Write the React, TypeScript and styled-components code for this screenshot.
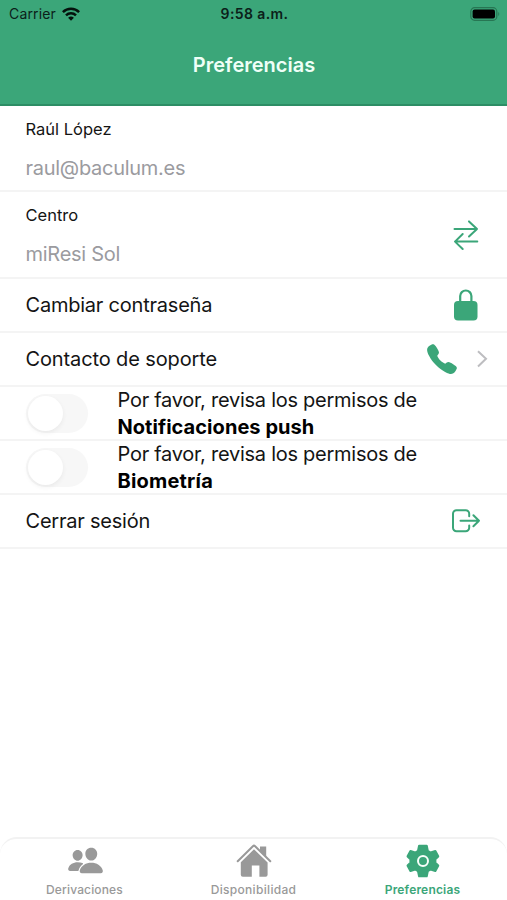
import React from "react";
import styled, { createGlobalStyle } from "styled-components";
import { IoCall, IoPeople } from "react-icons/io5";

const GREEN = "#3ba679";

const GlobalStyle = createGlobalStyle`
  * { box-sizing: border-box; }
  body { margin: 0; background: #fff; font-family: Inter, "Liberation Sans", sans-serif; }
`;

const Screen = styled.div`
  width: 100%;
  height: 100vh;
  display: flex;
  flex-direction: column;
  overflow: hidden;
  background: #fff;
  color: #141414;
`;

const Header = styled.header`
  height: 106px;
  flex: none;
  background: ${GREEN};
  border-bottom: 2px solid #2d8d65;
`;

const StatusBar = styled.div`
  height: 27px;
  padding: 0 7px 0 9px;
  display: grid;
  grid-template-columns: 1fr auto 1fr;
  align-items: center;
  color: #0b2019;
  font-size: 14px;
`;

const Carrier = styled.span`
  display: flex;
  align-items: center;
  gap: 6px;
  letter-spacing: 0.15px;
`;

const Clock = styled.span`
  font-weight: 600;
  letter-spacing: 0.4px;
`;

const Battery = styled.span`
  justify-self: end;
  display: flex;
`;

const Title = styled.h1`
  margin: 0;
  height: 75px;
  padding-left: 1px;
  display: flex;
  align-items: center;
  justify-content: center;
  color: #effff7;
  font-size: 20px;
  font-weight: 600;
`;

const List = styled.main`
  flex: 1;
`;

const Row = styled.div<{ $height?: number; $inset?: number }>`
  height: ${(p) => p.$height ?? 54}px;
  padding: 0 ${(p) => p.$inset ?? 28}px 0 25.5px;
  border-bottom: 2px solid #f4f4f4;
  display: flex;
  align-items: center;
`;

const Field = styled.div`
  flex: 1;
  align-self: stretch;
  padding-top: 10px;
`;

const FieldLabel = styled.div`
  height: 26px;
  line-height: 26px;
  font-size: 16.5px;
`;

const FieldValue = styled.div`
  margin-top: 13px;
  height: 26px;
  line-height: 26px;
  font-size: 20px;
  letter-spacing: -0.27px;
  color: #9b9b9f;
`;

const RowLabel = styled.span<{ $tracking?: number }>`
  flex: 1;
  font-size: 20px;
  letter-spacing: ${(p) => p.$tracking ?? -0.22}px;
`;

const Icon = styled.svg`
  display: block;
  flex: none;
  overflow: visible;
`;

const PhoneIcon = styled(IoCall)`
  color: ${GREEN};
  margin-right: 18px;
`;

const Toggle = styled.span`
  width: 62px;
  height: 39px;
  margin-right: 30px;
  padding: 2px;
  border-radius: 20px;
  background: #f7f7f7;
  flex: none;
`;

const Knob = styled.span`
  display: block;
  width: 35px;
  height: 35px;
  border-radius: 50%;
  background: #fff;
  box-shadow: 0 2px 5px rgba(0, 0, 0, 0.06);
`;

const Permission = styled.p`
  margin: 0;
  padding-top: 2px;
  font-size: 20px;
  line-height: 27px;
  letter-spacing: -0.26px;
  white-space: nowrap;
`;

const Strong = styled.strong<{ $tracking: number }>`
  display: block;
  font-weight: 700;
  color: #000;
  letter-spacing: ${(p) => p.$tracking}px;
`;

const TabBar = styled.nav`
  flex: none;
  height: 63px;
  display: grid;
  grid-template-columns: repeat(3, 1fr);
  border-top: 2px solid #f2f2f2;
  border-radius: 17px 17px 0 0;
`;

const Tab = styled.div<{ $active?: boolean }>`
  display: flex;
  flex-direction: column;
  align-items: center;
  color: ${(p) => (p.$active ? GREEN : "#999")};
  font-weight: ${(p) => (p.$active ? 600 : 500)};
`;

const TabIcon = styled.span<{ $nudge?: number }>`
  height: 43px;
  padding-left: ${(p) => p.$nudge ?? 0}px;
  display: flex;
  align-items: center;
`;

const TabLabel = styled.span<{ $tracking: number }>`
  font-size: 12px;
  line-height: 15px;
  letter-spacing: ${(p) => p.$tracking}px;
`;

function WifiIcon() {
  return (
    <Icon width="18" height="14" viewBox="0 0 18 14" fill="none" stroke="#04120c" strokeWidth="2.5">
      <path d="M.9 5.1a11.6 11.6 0 0 1 16.2 0M4 8.3a7.2 7.2 0 0 1 10 0" />
      <path d="M9 13.7 6.1 10.8a4.2 4.2 0 0 1 5.8 0Z" fill="#04120c" stroke="none" />
    </Icon>
  );
}

function BatteryIcon() {
  return (
    <Icon width="30" height="14" viewBox="0 0 30 14">
      <rect x=".8" y=".7" width="26" height="12.6" rx="3.8" fill="none" stroke="#277653" strokeWidth="1.2" />
      <rect x="2.6" y="2.4" width="22.4" height="9.2" rx="2" fill="#000" />
      <path d="M28.3 5c1.3.6 1.3 3.4 0 4Z" fill="#277653" />
    </Icon>
  );
}

function SwapIcon() {
  return (
    <Icon width="26" height="30" viewBox="0 0 26 30" fill="none" stroke={GREEN} strokeWidth="2" strokeLinecap="round" strokeLinejoin="round">
      <path d="M1.5 9H24M16 1.4 24 9l-8 7.5M24.3 21.6H2M9.7 14 2 21.6 9.7 29" />
    </Icon>
  );
}

function LockIcon() {
  return (
    <Icon width="26" height="32" viewBox="0 0 26 32">
      <path d="M7.2 13V7.1a5.6 5.6 0 0 1 11.2 0V13" fill="none" stroke={GREEN} strokeWidth="2.2" />
      <rect x="1" y="12" width="23.5" height="19.5" rx="4" fill={GREEN} />
    </Icon>
  );
}

function ChevronIcon() {
  return (
    <Icon width="10" height="18" viewBox="0 0 10 18" fill="none" stroke="#bdbdc0" strokeWidth="2">
      <path d="m1 1.3 8 7.5-8 7.6" />
    </Icon>
  );
}

function LogoutIcon() {
  return (
    <Icon width="28" height="24" viewBox="0 0 28 24" fill="none" stroke={GREEN} strokeWidth="2" strokeLinecap="round" strokeLinejoin="round">
      <path d="M17.2 7.2V4.8a3.6 3.6 0 0 0-3.6-3.6H4.5A3.5 3.5 0 0 0 1 4.7v14.1a3.5 3.5 0 0 0 3.5 3.5h9.1a3.6 3.6 0 0 0 3.6-3.6v-2.2M8.5 11.8H27M21.4 6.2l5.6 5.6-5.6 5.5" />
    </Icon>
  );
}

function HomeIcon() {
  return (
    <Icon width="36" height="34" viewBox="0 0 36 34" fill="#999">
      <path d="M18 5.3 31.6 18.5v12.3q0 2-2 2h-6.2V21.5h-7.6v11.3H6.8q-2 0-2-2V18.3Z" />
      <path d="M1.7 18.3 16.9 3.5q1.1-1.1 2.2 0l15.2 14.8" fill="none" stroke="#fff" strokeWidth="3" />
      <path d="M24 2.4h6.2v11L24 7.5Z" />
      <path d="M1.7 17.2 16.9 2.2q1.1-1.1 2.2 0l15.2 15" fill="none" stroke="#999" strokeWidth="2" strokeLinecap="round" />
    </Icon>
  );
}

function GearIcon() {
  return (
    <Icon width="34" height="34" viewBox="0 0 34 34">
      <path
        d="M13 1.5h8l1.1 5.1 3.1 1.8 4.9-1.5 3 5.4-3 3v3.4l3 3-3 5.4-4.9-1.5-3.1 1.8-1.1 5.1h-8l-1.1-5.1-3.1-1.8-4.9 1.5-3-5.4 3-3v-3.4l-3-3 3-5.4 4.9 1.5 3.1-1.8Z"
        transform="translate(17 17) scale(.95 .98) translate(-17.1 -17)"
        fill={GREEN}
        stroke={GREEN}
        strokeWidth="2.2"
        strokeLinejoin="round"
      />
      <circle cx="17" cy="17" r="5" fill={GREEN} stroke="#f8fffb" strokeWidth="2" />
    </Icon>
  );
}

export default function App() {
  return (
    <Screen>
      <GlobalStyle />
      <Header>
        <StatusBar>
          <Carrier>Carrier <WifiIcon /></Carrier>
          <Clock>9:58 a.m.</Clock>
          <Battery><BatteryIcon /></Battery>
        </StatusBar>
        <Title>Preferencias</Title>
      </Header>
      <List>
        <Row $height={86}>
          <Field>
            <FieldLabel>Raúl López</FieldLabel>
            <FieldValue>raul@baculum.es</FieldValue>
          </Field>
        </Row>
        <Row $height={87}>
          <Field>
            <FieldLabel>Centro</FieldLabel>
            <FieldValue>miResi Sol</FieldValue>
          </Field>
          <SwapIcon />
        </Row>
        <Row><RowLabel>Cambiar contraseña</RowLabel><LockIcon /></Row>
        <Row $inset={20}>
          <RowLabel $tracking={-0.12}>Contacto de soporte</RowLabel>
          <PhoneIcon size={34} />
          <ChevronIcon />
        </Row>
        <Row>
          <Toggle><Knob /></Toggle>
          <Permission>Por favor, revisa los permisos de<Strong $tracking={0.05}>Notificaciones push</Strong></Permission>
        </Row>
        <Row>
          <Toggle><Knob /></Toggle>
          <Permission>Por favor, revisa los permisos de<Strong $tracking={0.2}>Biometría</Strong></Permission>
        </Row>
        <Row $inset={27}><RowLabel>Cerrar sesión</RowLabel><LogoutIcon /></Row>
      </List>
      <TabBar>
        <Tab><TabIcon $nudge={2}><IoPeople size={37} /></TabIcon><TabLabel $tracking={0.15}>Derivaciones</TabLabel></Tab>
        <Tab><TabIcon><HomeIcon /></TabIcon><TabLabel $tracking={0.32}>Disponibilidad</TabLabel></Tab>
        <Tab $active><TabIcon><GearIcon /></TabIcon><TabLabel $tracking={0.18}>Preferencias</TabLabel></Tab>
      </TabBar>
    </Screen>
  );
}
